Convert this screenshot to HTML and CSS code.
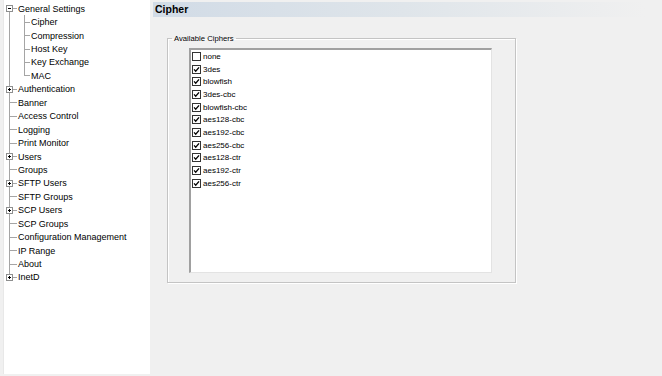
FILE: index.html
```html
<!DOCTYPE html>
<html lang="en">
<head>
  <meta charset="UTF-8" />
  <title>Cipher Settings</title>
  <link rel="stylesheet" href="styles.css">
</head>
<body>
  <div class="app">
    <div class="tree">
      <div class="node"><span class="g g-first"><span class="box minus"></span></span><span class="lbl">General Settings</span></div>
      <div class="node"><span class="g g-pipe"></span><span class="g2 g-tee"></span><span class="lbl">Cipher</span></div>
      <div class="node"><span class="g g-pipe"></span><span class="g2 g-tee"></span><span class="lbl">Compression</span></div>
      <div class="node"><span class="g g-pipe"></span><span class="g2 g-tee"></span><span class="lbl">Host Key</span></div>
      <div class="node"><span class="g g-pipe"></span><span class="g2 g-tee"></span><span class="lbl">Key Exchange</span></div>
      <div class="node"><span class="g g-pipe"></span><span class="g2 g-end"></span><span class="lbl">MAC</span></div>
      <div class="node"><span class="g g-tee"><span class="box plus"></span></span><span class="lbl">Authentication</span></div>
      <div class="node"><span class="g g-tee"></span><span class="lbl">Banner</span></div>
      <div class="node"><span class="g g-tee"></span><span class="lbl">Access Control</span></div>
      <div class="node"><span class="g g-tee"></span><span class="lbl">Logging</span></div>
      <div class="node"><span class="g g-tee"></span><span class="lbl">Print Monitor</span></div>
      <div class="node"><span class="g g-tee"><span class="box plus"></span></span><span class="lbl">Users</span></div>
      <div class="node"><span class="g g-tee"></span><span class="lbl">Groups</span></div>
      <div class="node"><span class="g g-tee"><span class="box plus"></span></span><span class="lbl">SFTP Users</span></div>
      <div class="node"><span class="g g-tee"></span><span class="lbl">SFTP Groups</span></div>
      <div class="node"><span class="g g-tee"><span class="box plus"></span></span><span class="lbl">SCP Users</span></div>
      <div class="node"><span class="g g-tee"></span><span class="lbl">SCP Groups</span></div>
      <div class="node"><span class="g g-tee"></span><span class="lbl">Configuration Management</span></div>
      <div class="node"><span class="g g-tee"></span><span class="lbl">IP Range</span></div>
      <div class="node"><span class="g g-tee"></span><span class="lbl">About</span></div>
      <div class="node"><span class="g g-end"><span class="box plus"></span></span><span class="lbl">InetD</span></div>
    </div>

    <div class="pane">
      <div class="title">Cipher</div>
      <fieldset class="group">
        <legend>Available Ciphers</legend>
        <div class="list">
          <div class="item"><span class="cb"></span>none</div>
          <div class="item"><span class="cb"><svg viewBox="0 0 8 8"><path d="M1.2 3.8 L3.1 5.9 L6.9 1.5" /></svg></span>3des</div>
          <div class="item"><span class="cb"><svg viewBox="0 0 8 8"><path d="M1.2 3.8 L3.1 5.9 L6.9 1.5" /></svg></span>blowfish</div>
          <div class="item"><span class="cb"><svg viewBox="0 0 8 8"><path d="M1.2 3.8 L3.1 5.9 L6.9 1.5" /></svg></span>3des-cbc</div>
          <div class="item"><span class="cb"><svg viewBox="0 0 8 8"><path d="M1.2 3.8 L3.1 5.9 L6.9 1.5" /></svg></span>blowfish-cbc</div>
          <div class="item"><span class="cb"><svg viewBox="0 0 8 8"><path d="M1.2 3.8 L3.1 5.9 L6.9 1.5" /></svg></span>aes128-cbc</div>
          <div class="item"><span class="cb"><svg viewBox="0 0 8 8"><path d="M1.2 3.8 L3.1 5.9 L6.9 1.5" /></svg></span>aes192-cbc</div>
          <div class="item"><span class="cb"><svg viewBox="0 0 8 8"><path d="M1.2 3.8 L3.1 5.9 L6.9 1.5" /></svg></span>aes256-cbc</div>
          <div class="item"><span class="cb"><svg viewBox="0 0 8 8"><path d="M1.2 3.8 L3.1 5.9 L6.9 1.5" /></svg></span>aes128-ctr</div>
          <div class="item"><span class="cb"><svg viewBox="0 0 8 8"><path d="M1.2 3.8 L3.1 5.9 L6.9 1.5" /></svg></span>aes192-ctr</div>
          <div class="item"><span class="cb"><svg viewBox="0 0 8 8"><path d="M1.2 3.8 L3.1 5.9 L6.9 1.5" /></svg></span>aes256-ctr</div>
        </div>
      </fieldset>
    </div>
  </div>
</body>
</html>
```

FILE: styles.css
```css
* {
  margin: 0;
  padding: 0;
  box-sizing: border-box;
}
body {
  font-family: 'Liberation Sans', Arial, sans-serif;
  background: #f0f0f0;
  color: #000;
}
.app {
  display: flex;
  height: 376px;
}

/* tree */
.tree {
  margin-left: 3px;
  width: 147px;
  height: 374px;
  background: #fff;
  border-left: 1px solid #e8e8e8;
  padding-top: 2px;
  font-size: 9px;
}
.node {
  display: flex;
  align-items: center;
  height: 13.45px;
  white-space: nowrap;
}
.g, .g2 {
  height: 100%;
  display: flex;
  align-items: center;
  flex-shrink: 0;
}
.g { width: 13px; }
.g2 { width: 13px; }
.lbl {
  padding-left: 1px;
}
.g-tee {
  background:
    linear-gradient(#a5a5a5, #a5a5a5) 5px 0 / 1px 100% no-repeat,
    linear-gradient(#a5a5a5, #a5a5a5) 5px 50% / 8px 1px no-repeat;
}
.g-first {
  background:
    linear-gradient(#a5a5a5, #a5a5a5) 5px 100% / 1px 50% no-repeat,
    linear-gradient(#a5a5a5, #a5a5a5) 5px 50% / 8px 1px no-repeat;
}
.g-end {
  background:
    linear-gradient(#a5a5a5, #a5a5a5) 5px 0 / 1px 50% no-repeat,
    linear-gradient(#a5a5a5, #a5a5a5) 5px 50% / 8px 1px no-repeat;
}
.g-pipe {
  background: linear-gradient(#a5a5a5, #a5a5a5) 5px 0 / 1px 100% no-repeat;
}
.g2.g-tee {
  background:
    linear-gradient(#a5a5a5, #a5a5a5) 7px 0 / 1px 100% no-repeat,
    linear-gradient(#a5a5a5, #a5a5a5) 7px 50% / 6px 1px no-repeat;
}
.g2.g-end {
  background:
    linear-gradient(#a5a5a5, #a5a5a5) 7px 0 / 1px 50% no-repeat,
    linear-gradient(#a5a5a5, #a5a5a5) 7px 50% / 6px 1px no-repeat;
}
.box {
  width: 7px;
  height: 7px;
  margin-left: 2px;
  border: 1px solid #8e8f8f;
  background: #fff;
}
.box.minus {
  background:
    linear-gradient(#000, #000) 50% 50% / 3px 1px no-repeat,
    #fff;
}
.box.plus {
  background:
    linear-gradient(#000, #000) 50% 50% / 3px 1px no-repeat,
    linear-gradient(#000, #000) 50% 50% / 1px 3px no-repeat,
    #fff;
}

/* right pane */
.pane {
  flex: 1;
  margin-left: 3px;
  margin-right: 7px;
  padding-top: 2px;
}
.title {
  height: 15px;
  line-height: 15px;
  padding-left: 2px;
  font-size: 10.5px;
  font-weight: bold;
  background: linear-gradient(to right, #d1dbe6, #dfe5ea 50%, #f0f0f0 98%);
}
.group {
  margin: 17px 0 0 14px;
  width: 349px;
  height: 249px;
  border: 1px solid #c4c4c4;
  box-shadow: inset 1px 1px 0 #fff, 1px 1px 0 #fff;
  padding: 0 0 0 4px;
  font-size: 7.7px;
}
.group legend {
  padding: 0 2px;
  line-height: 9px;
  color: #000;
}
.list {
  margin: 5px 0 0 17px;
  width: 303px;
  height: 225px;
  background: #fff;
  border-top: 2px solid #a0a0a0;
  border-left: 2px solid #a0a0a0;
  border-right: 1px solid #e3e3e3;
  border-bottom: 1px solid #e3e3e3;
  padding-left: 1px;
  font-size: 8px;
}
.item {
  display: flex;
  align-items: center;
  height: 12.7px;
}
.cb {
  width: 9px;
  height: 9px;
  margin-right: 2px;
  border: 1px solid #333;
  background: #fff;
  display: flex;
}
.cb svg {
  width: 7px;
  height: 7px;
  fill: none;
  stroke: #000;
  stroke-width: 1.5;
}
```
